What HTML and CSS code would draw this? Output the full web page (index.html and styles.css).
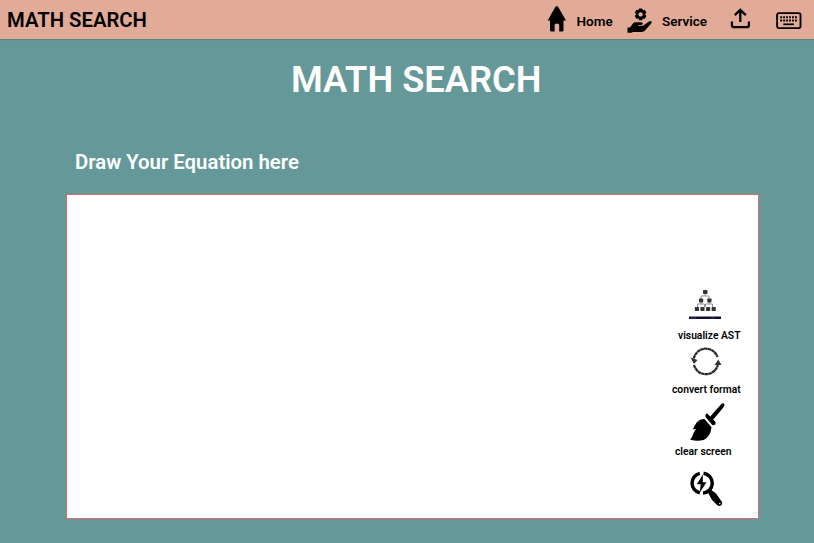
FILE: index.html
```html
<!DOCTYPE html>
<html lang="en">
<head>
<meta charset="utf-8">
<title>Math Search</title>
<link rel="stylesheet" href="styles.css">
</head>
<body>
<header class="topbar">
  <div class="brand">MATH SEARCH</div>
  <nav class="nav">
    <svg class="icon-home" width="20" height="28" viewBox="0 0 20 28"><path d="M9.700 1Q10.500 1 11.200 2L19 15.500H16.500V25.300Q16.500 26.500 15.300 26.500H12.200V20Q12.200 18.500 10 18.500T7.600 20V26.500H4.500Q3 26.500 3 25V15.500H.6L8.300 2Q9 1 9.700 1Z"/></svg>
    <a class="nav-home">Home</a>
    <svg class="icon-service" width="26" height="28" viewBox="0 0 26 28"><path fill-rule="evenodd" d="M12.100 3.500h3l.7 1.800 2-.5 1.600 2.900-1.300 1.600 1.300 1.700-1.600 2.800-2-.4-.7 1.900h-3l-.7-1.900-2 .4L7.800 11l1.300-1.700-1.300-1.600 1.600-2.900 2 .5zM13.600 7.200a2.200 2.200 0 1 0 0 4.400 2.200 2.200 0 0 0 0-4.400z"/><path d="M.5 22.500H3L6 18.500Q7 17.200 8.500 17.200H14Q16 17.300 15.800 18.700 15.500 19.900 14 19.900H11V20.800H16L22 16.500Q23.500 15.600 24.500 16.500 25.200 17.300 24 18.800L18 25.500Q16.800 26.900 15 26.900H6L4.500 27.700H.5Z"/></svg>
    <a class="nav-service">Service</a>
    <svg class="icon-upload" width="22" height="22" viewBox="0 0 22 22"><path d="M10.300 14V2.500M4.800 7.200 10.300 1.900 15.800 7.200M1.900 13.500V17Q1.900 19.200 4 19.200H16.800Q18.900 19.200 18.900 17V13.500" fill="none" stroke="#000" stroke-width="2.300"/></svg>
    <svg class="icon-keys" width="26" height="18" viewBox="0 0 26 18"><rect x="1.100" y="1.100" width="23.400" height="15" rx="1.800" fill="none" stroke="#000" stroke-width="1.900"/><path d="M4.200 5.200H21M4.200 8.500H21" stroke="#000" stroke-width="1.900" stroke-dasharray="1.900 1.050"/><path d="M7.300 12.300H18" stroke="#000" stroke-width="1.700"/></svg>
  </nav>
</header>
<main>
  <h1 class="title">MATH SEARCH</h1>
  <h2 class="subtitle">Draw Your Equation here</h2>
  <section class="board">
    <div class="tools">
      <div class="tool tool-ast">
        <svg width="34" height="32" viewBox="0 0 34 32"><path d="M17 5V7M13 10V7H21V10M13 12V15M21 12V15M9.500 18V15H16.500V18M17.500 18V15H24.500V18" fill="none" stroke="#777" stroke-width=".8"/><g fill="#333"><rect x="15" y="1" width="4.500" height="4" rx=".7"/><rect x="11" y="9.500" width="4.200" height="4" rx=".7"/><rect x="19.300" y="9.500" width="4.200" height="4" rx=".7"/><rect x="6.800" y="18" width="4.200" height="4" rx=".7"/><rect x="12.400" y="18" width="4.200" height="4" rx=".7"/><rect x="18" y="18" width="4.200" height="4" rx=".7"/><rect x="23.600" y="18" width="4.200" height="4" rx=".7"/></g><path d="M1 27.500H33V30H1Z" fill="#130b31"/><path d="M3 29H8M23 29H26" stroke="#66627a" stroke-width=".6"/></svg>
        <span>visualize AST</span>
      </div>
      <div class="tool tool-convert">
        <svg width="32" height="30" viewBox="0 0 32 30"><path d="M3.800 12.500A12.300 12.300 0 0 1 27.500 11M4 19A12.300 12.300 0 0 0 27.800 19" fill="none" stroke="#292929" stroke-width="2.300" stroke-dasharray="3.500 .25"/><path d="M.5 11.500 7.500 14 4 18ZM24.500 19 28.300 13.500 31.500 19Z" fill="#333"/></svg>
        <span>convert format</span>
      </div>
      <div class="tool tool-clear">
        <svg width="36" height="40" viewBox="0 0 36 40"><path d="M15.500 15 15.700 12 17.200 11.600 20.200 14.500 30.700 2.700Q33 .6 34.200 1.700 35.200 2.800 33.300 5.500L23.300 17.500 25.500 20V22.500L22.500 23.200ZM14.500 17 21.500 25.300Q20.500 35 13.500 38Q7 39.700 0 37.500 2 36 3.500 31L6 27 2.800 27.500Q4.500 23.500 7 20 10.500 16.500 14.500 17Z"/></svg>
        <span>clear screen</span>
      </div>
      <div class="tool tool-search">
        <svg width="34" height="36" viewBox="0 0 34 36"><path d="M9.800 3.400A10 10 0 0 0 9.800 22.900M13.500 3.200A10 10 0 0 1 13 23.100" fill="none" stroke="#000" stroke-width="3.400"/><path d="M12.800 4.600 6.800 14.300H10.700L9.700 22.800 16.500 12.300H12.800ZM17.300 21.300 20.300 19.200 26 23.500 31.500 31.200Q33 33.400 31.200 35.300 29.300 36.500 27.300 35.200L22 30Z"/><circle cx="29.800" cy="33.500" r=".7" fill="#fff"/></svg>
      </div>
    </div>
  </section>
</main>
</body>
</html>
```
FILE: styles.css
```css
body {
  margin: 0;
  height: 543px;
  overflow: hidden;
  background: #659999;
  font-family: Roboto, sans-serif;
  color: #000;
}

svg {
  display: block;
  flex: none;
}

.topbar {
  display: flex;
  justify-content: space-between;
  height: 39px;
  background: #e2ab97;
  box-shadow: 0 1px 1px rgba(90, 90, 90, .4);
}

.brand {
  margin-left: 7px;
  font-size: 20.3px;
  font-weight: 600;
  line-height: 40px;
}

.nav {
  display: flex;
  align-items: flex-start;
  width: 267px;
  font-size: 13.5px;
  font-weight: 600;
  line-height: 43px;
}

.icon-home { margin-top: 5px; }
.nav-home { width: 51px; margin-left: 9.5px; }
.icon-service { margin-top: 5px; margin-left: -.5px; }
.nav-service { width: 59px; margin-left: 9px; }
.icon-upload { margin-top: 8px; margin-left: 9px; }
.icon-keys { margin-top: 12px; margin-left: 24px; }

.title {
  margin: 20px 0 0 291px;
  font-size: 36.3px;
  font-weight: 600;
  line-height: 41px;
  white-space: nowrap;
}

.subtitle {
  margin: 46px 0 0 75px;
  font-size: 20.35px;
  font-weight: 600;
  line-height: 32px;
}

.title,
.subtitle {
  color: #fff;
}

.board {
  box-sizing: border-box;
  display: flex;
  justify-content: flex-end;
  width: 693px;
  height: 325px;
  margin: 16px 0 0 66px;
  border: 1px solid #d96b68;
  background: #fff;
}

.tools {
  width: 88px;
  padding-top: 94px;
}

.tool {
  font-size: 10.3px;
  font-weight: 600;
  line-height: 14px;
  white-space: nowrap;
}

.tool svg { margin-left: 18px; }
.tool span { display: block; }
.tool-ast { height: 57px; }
.tool-ast span { margin: 8px 0 0 8px; }
.tool-convert { height: 56px; }
.tool-convert svg { margin-left: 20px; }
.tool-convert span { margin: 7px 0 0 2px; }
.tool-clear { height: 68px; }
.tool-clear svg { margin-left: 20px; }
.tool-clear span { margin: 3px 0 0 5px; }
.tool-search svg { margin-left: 20px; }
```
